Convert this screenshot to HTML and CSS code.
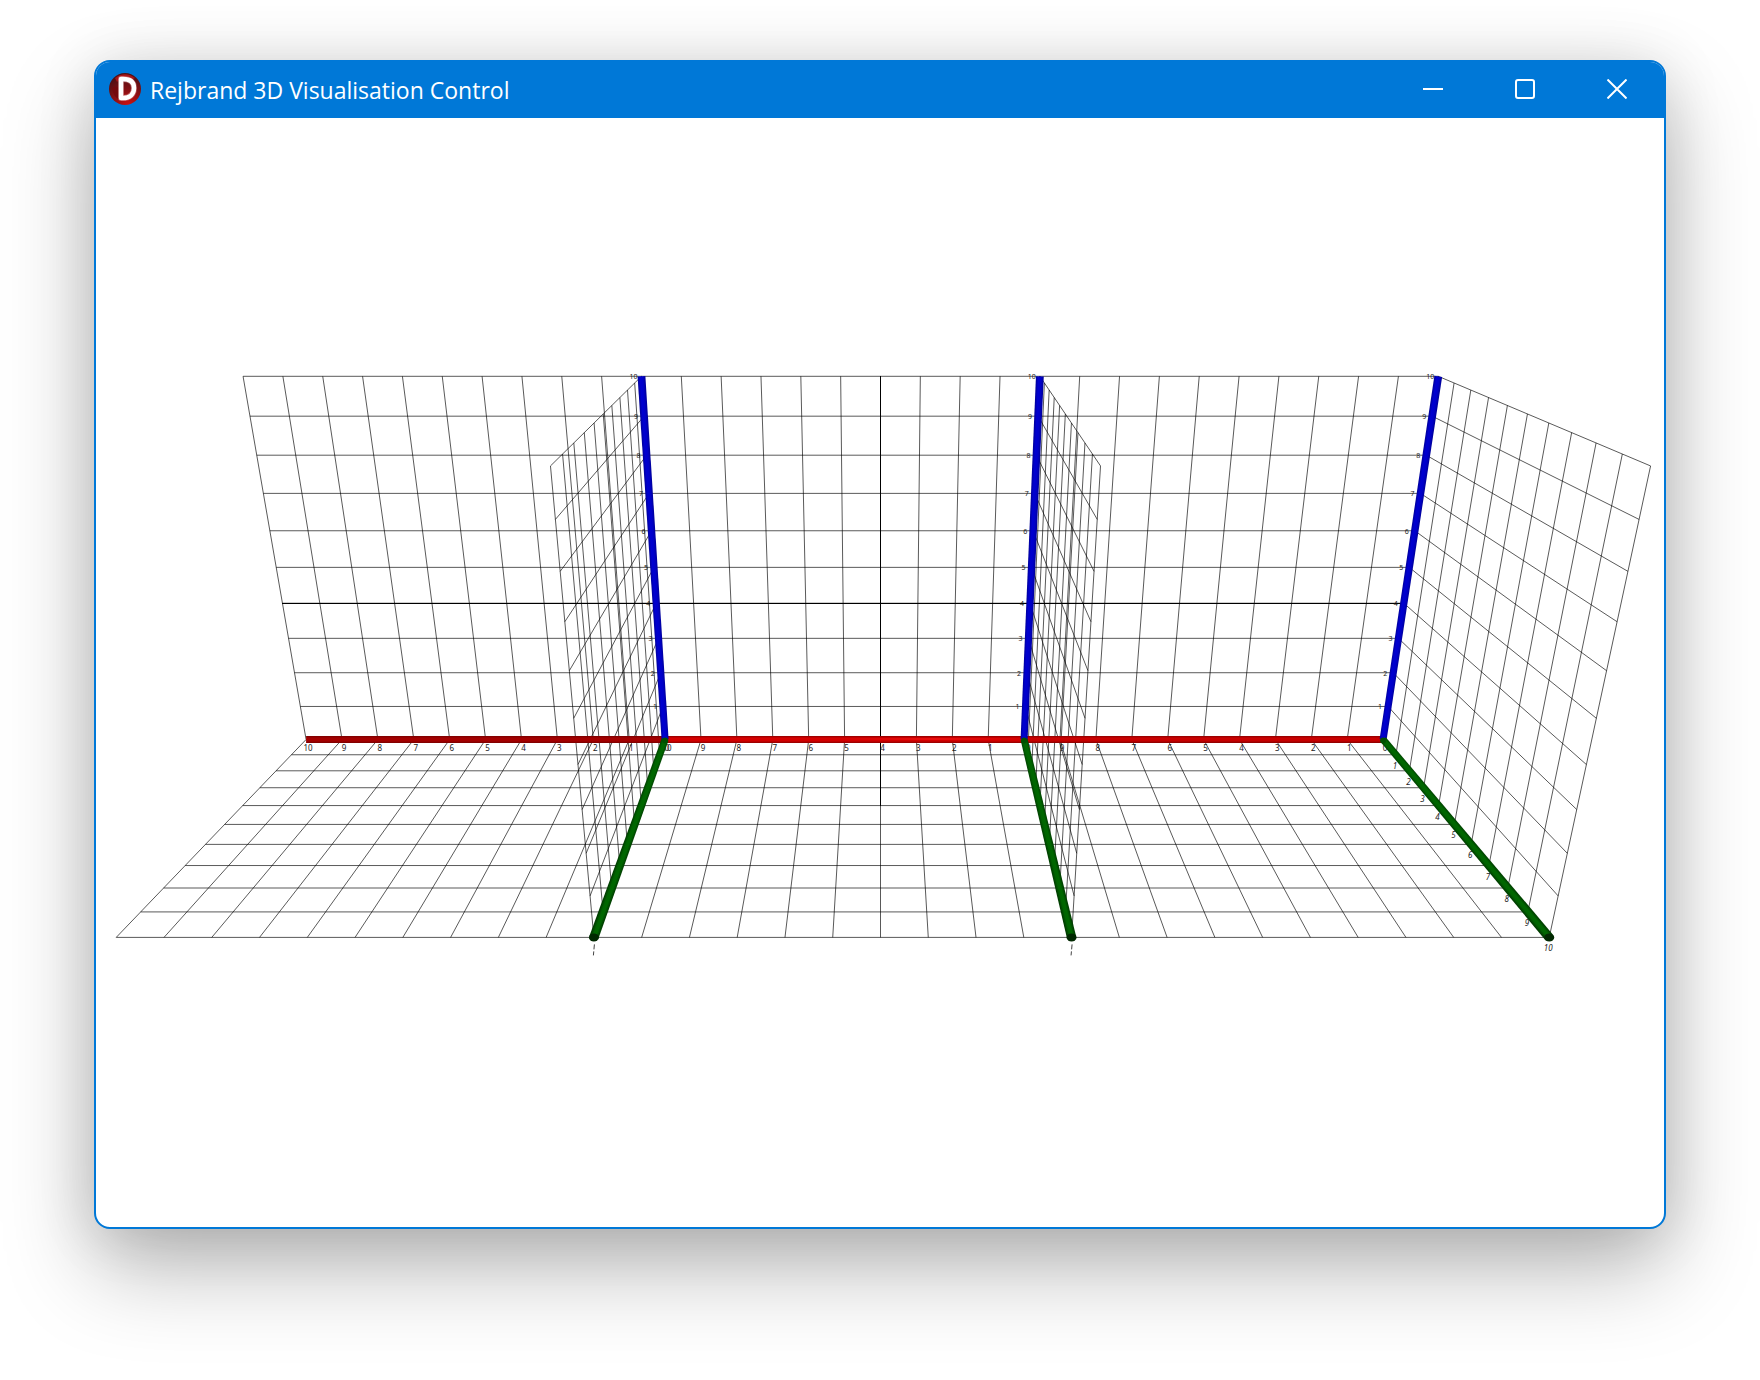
FILE: index.html
```html
<!DOCTYPE html>
<html lang="en">
<head>
<meta charset="utf-8">
<title>Rejbrand 3D Visualisation Control</title>
<link rel="stylesheet" href="styles.css">
</head>
<body>
<main class="window">
  <header class="titlebar">
    <svg class="app-icon" viewBox="0 0 32 32" aria-hidden="true">
      <defs>
        <radialGradient id="ball" cx="0.6" cy="1" r="0.95">
          <stop offset="0" stop-color="#d01010"/>
          <stop offset="0.45" stop-color="#8e1014"/>
          <stop offset="1" stop-color="#4c1014"/>
        </radialGradient>
      </defs>
      <circle cx="16" cy="16" r="16" fill="url(#ball)"/>
      <path d="M6 5A15 15 0 0 1 26 5L22 7Q14 2 8 9Z" fill="#a8161a"/>
      <path d="M3 15Q8 12 10 16L11 27Q4 24 3 15Z" fill="#74090d"/>
      <path d="M12 6V25H14C21 25 25 21 25 15C25 9 21 6 14 6Z" fill="none" stroke="#d99" stroke-width="6" stroke-linejoin="round" opacity="0.5"/>
      <path d="M12 6V25H14C21 25 25 21 25 15C25 9 21 6 14 6Z" fill="none" stroke="#fff" stroke-width="4.5" stroke-linejoin="round"/>
    </svg>
    <h1 class="title">Rejbrand 3D Visualisation Control</h1>
    <div class="controls">
      <button class="control" type="button" aria-label="Minimise"><svg viewBox="0 0 20 20"><path d="M0 10H20"/></svg></button>
      <button class="control" type="button" aria-label="Maximise"><svg viewBox="0 0 20 20"><rect x="1" y="1" width="18" height="18" rx="2"/></svg></button>
      <button class="control" type="button" aria-label="Close"><svg viewBox="0 0 20 20"><path d="M0.5 0.5L19.5 19.5M19.5 0.5L0.5 19.5"/></svg></button>
    </div>
  </header>
  <svg class="scene" id="scene" viewBox="96 118 1568 1109" role="img" aria-label="Three coordinate systems"></svg>
</main>
<script src="scene.js"></script>
</body>
</html>
```
FILE: styles.css
```css
* { box-sizing: border-box; }
body {
  margin: 0;
  padding: 60px 94px 150px;
  background: #fff;
  font-family: "Open Sans", "Noto Sans", sans-serif;
}
.window {
  border: 2px solid #0078d7;
  border-radius: 16px;
  background: #fff;
  overflow: hidden;
  box-shadow: 0 40px 90px rgba(0, 0, 0, 0.28), 0 4px 60px rgba(0, 0, 0, 0.12);
}
.titlebar {
  display: flex;
  align-items: center;
  height: 56px;
  padding: 0 1px 2px 13px;
  background: #0078d7;
  color: #fff;
}
.app-icon { width: 32px; height: 32px; }
.title {
  flex: 1;
  margin: 2px 0 0 9px;
  font-size: 23px;
  font-weight: 400;
  line-height: 32px;
}
.controls { display: flex; height: 100%; }
.control {
  display: flex;
  align-items: center;
  justify-content: center;
  width: 92px;
  padding: 0;
  border: 0;
  background: none;
}
.control svg {
  width: 20px;
  height: 20px;
  fill: none;
  stroke: #fff;
  stroke-width: 2;
}
.scene { display: block; width: 100%; height: auto; font-family: "Noto Sans", sans-serif; }
.grid { fill: none; stroke: #000; stroke-width: 1; stroke-opacity: 0.65; }
.grid-solid { fill: none; stroke: #000; stroke-width: 1; shape-rendering: crispEdges; }
.mark { stroke: #444; stroke-width: 1; stroke-dasharray: 5 2; }
.label { font-size: 8px; fill: #222; text-anchor: middle; }
.label-z { font-size: 7px; }
.label-y { font-style: italic; }
```
FILE: scene.js
```js
const scene = document.getElementById('scene');
const NS = 'http://www.w3.org/2000/svg';
const CENTER = 880.5;
const TOP = -0.5;

function add(name, attrs, text) {
  const el = document.createElementNS(NS, name);
  for (const key in attrs) el.setAttribute(key, attrs[key]);
  if (text !== undefined) el.textContent = text;
  scene.appendChild(el);
  return el;
}

// Perspective camera: x to the right, y towards the viewer, z upwards.
function project(x, y, z) {
  const w = 0.027855 - 0.000692 * y - 0.0002755 * z;
  return [CENTER + x / w, TOP + (20.613 - 0.0978 * y - 1.1155 * z) / w, 1 / w];
}

function segment(a, b) {
  const p = project(...a), q = project(...b);
  return `M${p[0].toFixed(2)} ${p[1].toFixed(2)}L${q[0].toFixed(2)} ${q[1].toFixed(2)}`;
}

function rod(a, b, stops) {
  const p = project(...a), q = project(...b);
  const len = Math.hypot(q[0] - p[0], q[1] - p[1]);
  const nx = -(q[1] - p[1]) / len, ny = (q[0] - p[0]) / len;
  const r = 0.098;
  const mx = (p[0] + q[0]) / 2, my = (p[1] + q[1]) / 2;
  const id = 'rod' + scene.childNodes.length;
  const grad = add('linearGradient', {
    id, gradientUnits: 'userSpaceOnUse',
    x1: mx - nx * 4, y1: my - ny * 4, x2: mx + nx * 4, y2: my + ny * 4
  });
  stops.forEach((c, i) => {
    const stop = document.createElementNS(NS, 'stop');
    stop.setAttribute('offset', i / (stops.length - 1));
    stop.setAttribute('stop-color', c);
    grad.appendChild(stop);
  });
  const pr = p[2] * r, qr = q[2] * r;
  add('polygon', {
    points: [[p[0] + nx * pr, p[1] + ny * pr], [q[0] + nx * qr, q[1] + ny * qr],
      [q[0] - nx * qr, q[1] - ny * qr], [p[0] - nx * pr, p[1] - ny * pr]].join(' '),
    fill: `url(#${id})`
  });
}

const origins = [-6, 4, 14];
const reds = [
  ['#700000', '#a40000', '#a40000', '#700000'],
  ['#800000', '#d80000', '#d00000', '#800000'],
  ['#800000', '#cc0000', '#c40000', '#780000']
];

let grid = '';
origins.forEach(ox => {
  for (let i = 0; i <= 10; i++) {
    grid += segment([ox - 10, 0, i], [ox, 0, i]);
    grid += segment([ox - 10, i, 0], [ox, i, 0]);
    if (i < 10 || ox === -6) {
      grid += segment([ox - i, 0, 0], [ox - i, 0, 10]);
      grid += segment([ox - i, 0, 0], [ox - i, 10, 0]);
    }
    grid += segment([ox, i, 0], [ox, i, 10]);
    grid += segment([ox, 0, i], [ox, 10, i]);
  }
});
add('path', { class: 'grid', d: grid });

add('path', {
  class: 'grid-solid',
  d: segment([-16, 0, 4], [14, 0, 4]) + segment([0, 0, 10], [0, 0, 0]) + segment([0, 0, 0], [0, 4, 0])
});

origins.forEach((ox, n) => {
  for (let i = 0; i <= 10; i++) {
    const p = project(ox - i, 0, 0);
    add('text', { class: 'label', x: p[0] + 2, y: 751 }, i);
  }
  for (let i = 1; i <= 10; i++) {
    const p = project(ox, 0, i);
    add('text', { class: 'label label-z', x: p[0] - 8, y: p[1] + 3 }, i);
  }
  if (n === 2) {
    for (let i = 1; i <= 10; i++) {
      const p = project(ox, i, 0);
      add('text', { class: 'label label-y', x: p[0] - 1, y: p[1] + 14 }, i);
    }
  } else {
    const p = project(ox, 10, 0);
    add('path', { class: 'mark', d: `M${p[0] + 0.5} ${p[1] + 7}l-1 11` });
  }
});

origins.forEach((ox, n) => {
  rod([ox - 10, 0, 0], [ox, 0, 0], reds[n]);
});

// Highlight where the light grazes the middle axis.
const glintFrom = project(-1, 0, 0), glintTo = project(4, 0, 0);
const glint = add('linearGradient', { id: 'glint' });
[['0', 0], ['0.5', 1], ['1', 0]].forEach(([offset, opacity]) => {
  const stop = document.createElementNS(NS, 'stop');
  stop.setAttribute('offset', offset);
  stop.setAttribute('stop-color', '#ff1a1a');
  stop.setAttribute('stop-opacity', opacity);
  glint.appendChild(stop);
});
add('rect', {
  x: glintFrom[0], y: glintFrom[1] - 1, width: glintTo[0] - glintFrom[0], height: 1, fill: 'url(#glint)'
});

origins.forEach(ox => {
  rod([ox, 0, 0], [ox, 0, 10], ['#000096', '#0000d0', '#0000c8', '#000096']);
  rod([ox, 0, 0], [ox, 10, 0], ['#004000', '#006800', '#006400', '#003c00']);
  const joint = project(ox, 0, 0);
  add('circle', { cx: joint[0], cy: joint[1] + 1, r: 3, fill: '#005000' });
  const end = project(ox, 10, 0);
  add('ellipse', { cx: end[0], cy: end[1], rx: 5, ry: 4, fill: '#002800' });
});
```
